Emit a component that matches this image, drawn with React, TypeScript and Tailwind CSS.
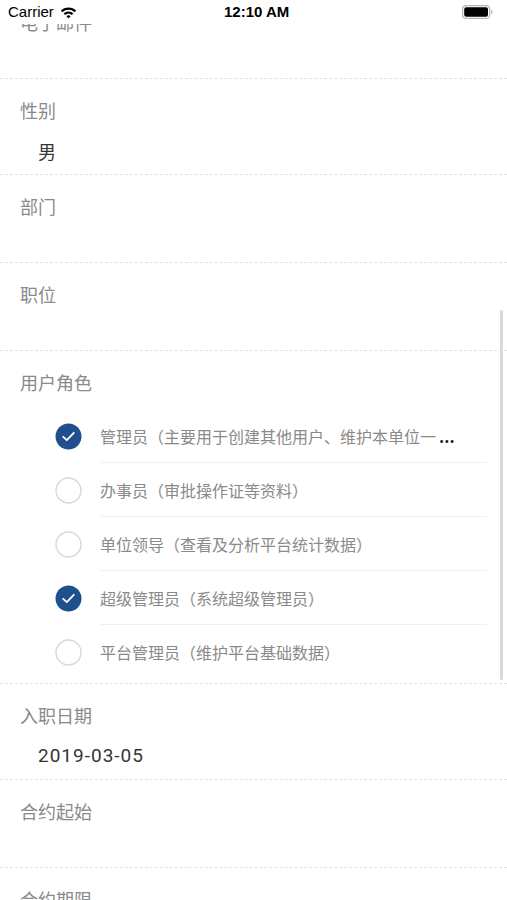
import { Fragment } from "react";

type Field = { label: string; value?: string; latin?: boolean };

const cjk = { fontFamily: '"Noto Sans CJK SC", "Noto Sans", sans-serif' };

const topFields: Field[] = [
  { label: "电子邮件" },
  { label: "性别", value: "男" },
  { label: "部门" },
  { label: "职位" },
];

const bottomFields: Field[] = [
  { label: "入职日期", value: "2019-03-05", latin: true },
  { label: "合约起始" },
  { label: "合约期限" },
];

const roles = [
  { name: "管理员（主要用于创建其他用户、维护本单位一", more: true, checked: true },
  { name: "办事员（审批操作证等资料）", checked: false },
  { name: "单位领导（查看及分析平台统计数据）", checked: false },
  { name: "超级管理员（系统超级管理员）", checked: true },
  { name: "平台管理员（维护平台基础数据）", checked: false },
];

const FieldRow = ({ field }: { field: Field }) => (
  <div className="border-b border-dashed border-[#e3e3e3] px-5 pt-[19px]">
    <p className="h-6 text-[18px] leading-6 text-[#8a8a8a]">{field.label}</p>
    {field.value ? (
      <p
        className={`mb-[11px] mt-[17px] h-6 pl-[18px] leading-6 text-[#363636] ${
          field.latin ? "text-[19px] tracking-[1px]" : "text-[18px]"
        }`}
        style={field.latin ? { fontFamily: 'Roboto, "Liberation Sans", sans-serif' } : undefined}
      >
        {field.value}
      </p>
    ) : (
      <div className="h-[44px]" />
    )}
  </div>
);

const CheckCircle = ({ checked }: { checked: boolean }) =>
  checked ? (
    <svg width="27" height="27" viewBox="0 0 27 27">
      <circle cx="13.5" cy="13.5" r="13" fill="#1f4f8d" />
      <path
        d="M8.2 13.8 L11.8 17.2 L18.8 9.8"
        fill="none"
        stroke="#fff"
        strokeWidth="1.8"
        strokeLinecap="round"
        strokeLinejoin="round"
      />
    </svg>
  ) : (
    <svg width="27" height="27" viewBox="0 0 27 27">
      <circle cx="13.5" cy="13.5" r="12.5" fill="#fff" stroke="#d8d8d8" strokeWidth="1.4" />
    </svg>
  );

const StatusBar = () => (
  <div
    className="absolute left-0 top-0 flex h-6 w-full items-center justify-between bg-white px-2"
    style={{ fontFamily: '"Liberation Sans", Roboto, sans-serif' }}
  >
    <div className="flex items-center gap-[6px]">
      <span className="text-[15px] text-black">Carrier</span>
      <svg width="17" height="13" viewBox="0 0 17 13">
        <path d="M0.8 4.6 A11 11 0 0 1 16.2 4.6 L14.6 6.2 A8.8 8.8 0 0 0 2.4 6.2 Z" fill="#000" />
        <path d="M3.6 7.4 A7 7 0 0 1 13.4 7.4 L11.8 9 A4.8 4.8 0 0 0 5.2 9 Z" fill="#000" />
        <path d="M6.4 10.2 A3 3 0 0 1 10.6 10.2 L8.5 12.4 Z" fill="#000" />
      </svg>
    </div>
    <span className="absolute left-[224px] text-[15px] font-bold text-black">12:10 AM</span>
    <svg width="31" height="14" viewBox="0 0 31 14" className="mr-[6px]">
      <rect x="0.6" y="0.6" width="27" height="12.8" rx="3.5" fill="none" stroke="#b5b5b5" strokeWidth="1.2" />
      <rect x="2.2" y="2.2" width="23.8" height="9.6" rx="2" fill="#000" />
      <path d="M29 4.8 Q30.6 5 30.6 7 Q30.6 9 29 9.2 Z" fill="#b5b5b5" />
    </svg>
  </div>
);

export default function App() {
  return (
    <div className="relative h-[900px] w-full overflow-hidden bg-white" style={cjk}>
      <div className="-mt-[9px] flex flex-col">
        {topFields.map((f) => (
          <FieldRow key={f.label} field={f} />
        ))}

        {/* 用户角色 */}
        <div className="border-b border-dashed border-[#e3e3e3] px-5 pb-1 pt-[19px]">
          <p className="h-6 text-[18px] leading-6 text-[#8a8a8a]">用户角色</p>
          <div className="mt-[15px] flex flex-col">
            {roles.map((r, i) => (
              <Fragment key={r.name}>
                <div className="flex h-[54px] items-center pl-[35px]">
                  <CheckCircle checked={r.checked} />
                  <div
                    className={`ml-[18px] flex h-full flex-1 items-center ${
                      i < roles.length - 1 ? "border-b border-[#f0f0f0]" : ""
                    }`}
                  >
                    <span className="whitespace-nowrap text-[16px] text-[#8a8a8a]">{r.name}</span>
                    {r.more && (
                      <span className="ml-[3px] text-[16px] font-bold leading-none text-[#222]">...</span>
                    )}
                  </div>
                </div>
              </Fragment>
            ))}
          </div>
        </div>

        {bottomFields.map((f) => (
          <FieldRow key={f.label} field={f} />
        ))}
      </div>

      {/* scroll indicator */}
      <div className="absolute left-[500px] top-[310px] h-[370px] w-[3px] rounded-full bg-[#d9d9d9]" />

      <StatusBar />
    </div>
  );
}
